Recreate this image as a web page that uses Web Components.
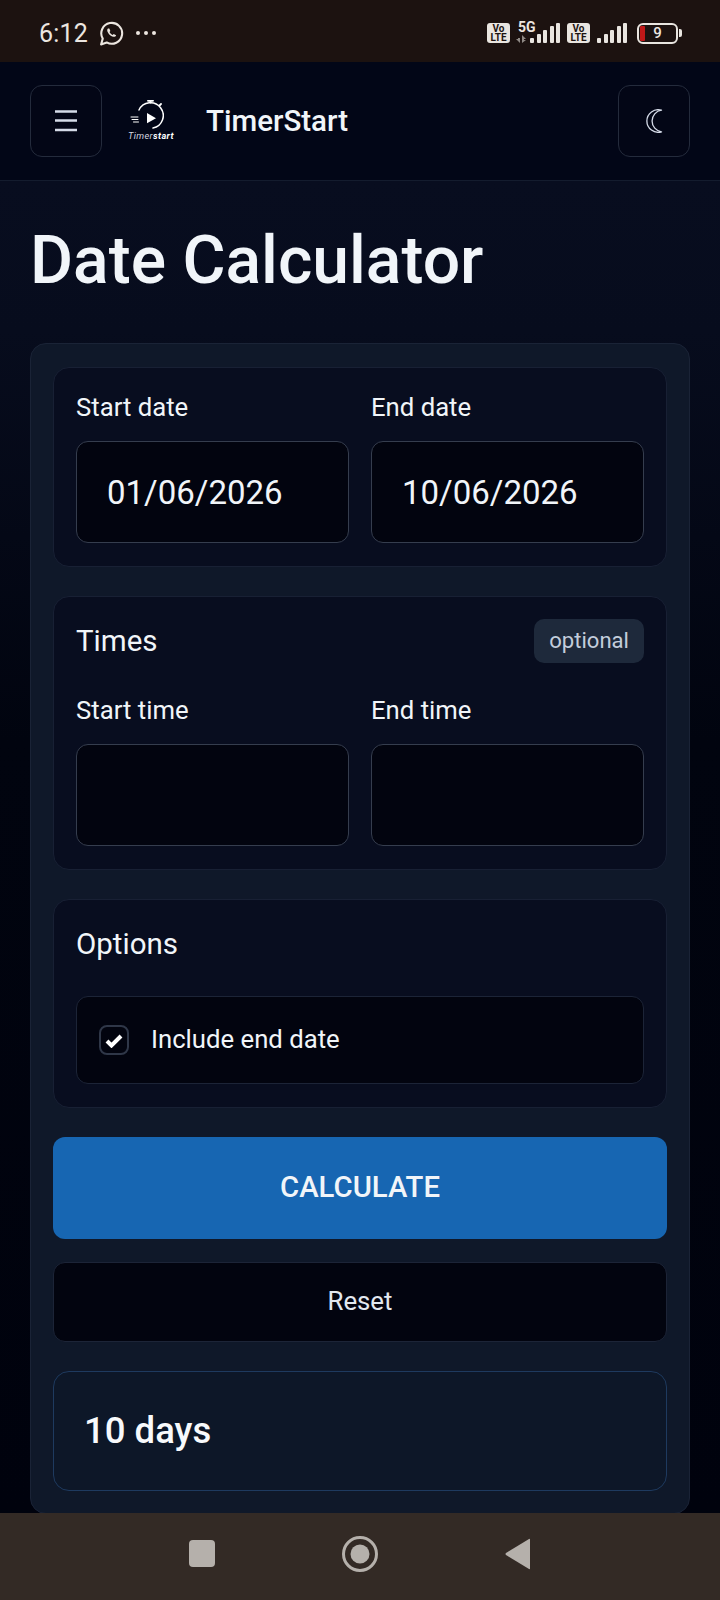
<!DOCTYPE html>
<html lang="en"><head><meta charset="utf-8"><title>Date Calculator</title>
<style>
html,body{margin:0;padding:0;height:1600px;overflow:hidden;background:#01040f;font-family:Roboto,"Liberation Sans",sans-serif;color:#f1f5f9}
#app{display:flex;flex-direction:column;width:720px;height:1600px;overflow:hidden}
main-area{flex:1}
</style></head><body>
<div id="app">
<status-bar></status-bar>
<top-bar></top-bar>
<main-area>
  <page-title>Date Calculator</page-title>
  <calc-card>
    <calc-section>
      <field-row>
        <date-field label="Start date" value="01/06/2026"></date-field>
        <date-field label="End date" value="10/06/2026"></date-field>
      </field-row>
    </calc-section>
    <calc-section heading="Times" badge="optional">
      <field-row>
        <date-field label="Start time"></date-field>
        <date-field label="End time"></date-field>
      </field-row>
    </calc-section>
    <calc-section heading="Options">
      <check-row>Include end date</check-row>
    </calc-section>
    <calc-button>CALCULATE</calc-button>
    <reset-button>Reset</reset-button>
    <result-box>10 days</result-box>
  </calc-card>
</main-area>
<nav-bar></nav-bar>
</div>
<script>
function def(name, html){
  customElements.define(name, class extends HTMLElement{
    connectedCallback(){
      if(this.shadowRoot) return;
      const r=this.attachShadow({mode:'open'});
      r.innerHTML=typeof html==='function'?html(this):html;
    }
  });
}
const bars=`<i style="height:5px"></i><i style="height:9px"></i><i style="height:13px"></i><i style="height:17px"></i><i style="height:20px"></i>`;
def('status-bar',()=>`<style>
:host{display:flex;align-items:center;height:62px;flex:none;background:#1c1210;color:#ece6e0;padding:4px 38px 0 39px;box-sizing:border-box;font-family:Roboto,sans-serif}
.t{font-size:25px;letter-spacing:.2px;line-height:1;margin-right:11px}
.sp{flex:1}
.vo{width:23px;height:20px;background:#e9e5e0;border-radius:3px;color:#1c1210;font:700 10px/9px Roboto,sans-serif;text-align:center;display:flex;flex-direction:column;justify-content:center;flex:none}
.vo span{display:block}
.bars{display:flex;align-items:flex-end;gap:2.500px;height:20px}
.bars i{display:block;width:4px;background:#e9e5e0;border-radius:1px}
.fg{position:relative;display:flex;align-items:flex-end;height:20px;margin-left:6px;width:45px;flex:none}
.fg b{position:absolute;left:2px;top:-2px;font:700 14px/12px Roboto,sans-serif}
.fg svg{margin-right:3px;flex:none}
.bat{display:flex;align-items:center;margin-left:10px}
.shell{width:37px;height:17px;border:2px solid #e9e5e0;border-radius:6px;position:relative;display:flex;align-items:center;justify-content:center;font:500 15px/1 Roboto,sans-serif;box-sizing:content-box}
.shell u{position:absolute;left:1px;top:1px;bottom:1px;width:5px;background:#c01818;border-radius:1px}
.nub{width:3px;height:8px;background:#e9e5e0;margin-left:1px;border-radius:0 2px 2px 0}
</style>
<span class="t">6:12</span>
<svg width="25" height="25" viewBox="0 0 24 24" fill="none" stroke="#ece6e0" stroke-width="2"><path d="M2 22.500l1.600-5.600A10 10 0 1 1 7.400 20.600z" stroke-linejoin="round"/><path d="M8.600 7.200c-1 .9-1 2.600.4 4.600 1.400 2 3.200 3.200 5 3.400 1.200.1 2.200-.7 2.400-1.600l-2.300-1.200-1 1c-1.200-.4-2.400-1.600-3-2.900l.8-1-1-2.300z" fill="#ece6e0" stroke="none"/></svg>
<svg style="margin-left:11px" width="22" height="6" viewBox="0 0 22 6" fill="#ece6e0"><circle cx="3" cy="3" r="2"/><circle cx="11" cy="3" r="2"/><circle cx="19" cy="3" r="2"/></svg>
<span class="sp"></span>
<div class="vo"><span>Vo</span><span>LTE</span></div>
<div class="fg"><b>5G</b>
 <svg width="11" height="8" viewBox="0 0 11 8" fill="#8f8985"><path d="M4 0v8L0 4h2V3h2zM6 0l4 4H8v1H10L6 8z"/></svg>
 <div class="bars">${bars}</div>
</div>
<div class="vo" style="margin-left:6px"><span>Vo</span><span>LTE</span></div>
<div class="bars" style="margin-left:7px">${bars}</div>
<div class="bat"><div class="shell"><u></u>9</div><div class="nub"></div></div>`);

def('top-bar',()=>`<style>
:host{display:flex;align-items:center;flex:none;height:119px;box-sizing:border-box;background:#020617;border-bottom:1px solid #141c2e;padding:0 30px}
.btn{width:72px;height:72px;box-sizing:border-box;border:1px solid #242b3c;border-radius:12px;display:flex;align-items:center;justify-content:center;background:#030616;flex:none}
.logo{width:46px;margin-left:26px;margin-bottom:3px;display:flex;flex-direction:column;align-items:flex-start}
.logo span{font:italic 400 9.200px/9px Roboto,sans-serif;color:#d6d9e0;letter-spacing:.4px;white-space:nowrap;margin-top:1px}
.logo b{font-weight:700;color:#fff}
h2{margin:2px 0 0 32px;font:500 29.500px/1 Roboto,sans-serif;color:#f1f5f9;flex:1}
</style>
<div class="btn"><svg width="24" height="22" viewBox="0 0 24 22" fill="none" stroke="#d5dbe8" stroke-width="2.500"><path d="M1 1.500h22M1 10.500h22M1 20h22"/></svg></div>
<div class="logo">
<svg width="36" height="30" viewBox="0 0 36 30" fill="none" stroke="#fff" stroke-width="1.500" stroke-linecap="round"><path d="M11 10A12.750 12.750 0 1 1 25 28"/><path d="M22.500 2.500v-1.500M20 .8h5M31.500 5.500l1.500-1.500" stroke-width="1.800"/><path d="M19 13l9 5.200-9 5z" fill="#fff" stroke="none"/><path d="M3 17h7M4 19.500h6M5.500 22h5" stroke-width="1"/></svg>
<span>Timer<b>start</b></span></div>
<h2>TimerStart</h2>
<div class="btn"><svg width="17" height="24" viewBox="0 0 17 24" fill="none" stroke="#d5dbe8" stroke-width="1.300" stroke-linejoin="round"><path d="M15.500 1.200A11.300 11.300 0 1 0 15.500 22.800A10.900 10.900 0 0 1 15.500 1.200z"/></svg></div>`);

def('page-title',`<style>
:host{display:block;padding:42px 0 44px 30px}
h1{margin:0;font:500 66px/76px Roboto,sans-serif;color:#f1f5f9}
</style><h1><slot></slot></h1>`);

def('main-area',`<style>:host{display:block;flex:1;min-height:0;overflow:hidden;background:linear-gradient(180deg,#080d1f 0,#070c1d 150px,#01040f 560px,#00020d 100%)}</style><slot></slot>`);

def('calc-card',`<style>
:host{display:flex;flex-direction:column;margin:0 30px;padding:23px 22px 22px;box-sizing:border-box;background:#0f1829;border:1px solid #1a2336;border-radius:16px}
::slotted(*){flex:none}
</style><slot></slot>`);

def('calc-section',(el)=>{
 const h=el.getAttribute('heading'),b=el.getAttribute('badge');
 return `<style>
:host{display:block;margin-bottom:29px;padding:22px 22px 23px;background:#080d1f;border:1px solid #182034;border-radius:16px}
.hd{display:flex;align-items:center;justify-content:space-between;height:44px;margin-bottom:30px}
.h{font:400 29.500px/1 Roboto,sans-serif;color:#f1f5f9;position:relative;top:1px}
.b{height:44px;box-sizing:border-box;padding:0 15px 2px;display:flex;align-items:center;background:#1e293b;border-radius:10px;color:#c3cddc;font:400 22.100px/1 Roboto,sans-serif}
</style>${h?`<div class="hd"><span class="h">${h}</span>${b?`<span class="b">${b}</span>`:''}</div>`:''}<slot></slot>`;
});

def('field-row',`<style>:host{display:grid;grid-template-columns:1fr 1fr;gap:22px}</style><slot></slot>`);

def('date-field',(el)=>{
 const v=el.getAttribute('value')||'';
 return `<style>
:host{display:block;min-width:0}
.l{font:400 25.700px/30px Roboto,sans-serif;color:#f1f5f9;margin:2px 0 19px;height:30px}
.i{height:102px;box-sizing:border-box;border:1px solid #353d4e;border-radius:12px;background:#02040f;display:flex;align-items:center;padding-left:30px;font:400 33px/1 Roboto,sans-serif;color:#f1f5f9}
</style><div class="l">${el.getAttribute('label')}</div><div class="i">${v}</div>`;
});

def('check-row',`<style>
:host{display:flex;align-items:center;height:88px;box-sizing:border-box;padding-left:22px;background:#02040f;border:1px solid #1c2437;border-radius:12px;font:400 25.700px/1 Roboto,sans-serif;color:#f1f5f9}
.c{width:30px;height:30px;box-sizing:border-box;border:2px solid #2f3748;border-radius:8px;margin-right:22px;display:flex;align-items:center;justify-content:center}
</style><span class="c"><svg width="18" height="15" viewBox="0 0 18 15" fill="none" stroke="#fff" stroke-width="4"><path d="M2 8l4.500 4.500L16 3"/></svg></span><slot></slot>`);

def('calc-button',`<style>
:host{display:flex;align-items:center;justify-content:center;height:102px;background:#1766b2;border-radius:12px;font:500 29.300px/1 Roboto,sans-serif;color:#f1f5f9;margin-bottom:23px}
</style><slot></slot>`);

def('reset-button',`<style>
:host{display:flex;align-items:center;justify-content:center;height:80px;box-sizing:border-box;background:#02040f;border:1px solid #1c2437;border-radius:12px;font:400 25.800px/1 Roboto,sans-serif;color:#e2e8f0;margin-bottom:29px}
</style><slot></slot>`);

def('result-box',`<style>
:host{display:flex;align-items:center;height:120px;box-sizing:border-box;padding-left:30px;background:#0d1728;border:1px solid #1e3a5f;border-radius:16px;font:500 36.500px/1 Roboto,sans-serif;color:#f8fafc}
</style><slot></slot>`);

def('nav-bar',`<style>
:host{display:flex;flex:none;height:87px;box-sizing:border-box;padding-bottom:6px;background:#332a25;align-items:center;justify-content:center}
.w{display:flex;align-items:center}
svg{display:block}
</style><div class="w">
<svg width="26" height="27" viewBox="0 0 26 27"><rect width="26" height="27" rx="4" fill="#b5b0ab"/></svg>
<svg style="margin-left:127px" width="36" height="36" viewBox="0 0 36 36" fill="none"><circle cx="18" cy="18" r="16.500" stroke="#b5b0ab" stroke-width="3"/><circle cx="18" cy="18" r="9.500" fill="#b5b0ab"/></svg>
<svg style="margin-left:127px" width="26" height="32" viewBox="0 0 26 32"><path d="M25 1.500v29q0 1-1 .5L1 17q-1-1 0-2L24 1q1-.5 1 .5z" fill="#b5b0ab"/></svg>
</div>`);
</script>
</body></html>
